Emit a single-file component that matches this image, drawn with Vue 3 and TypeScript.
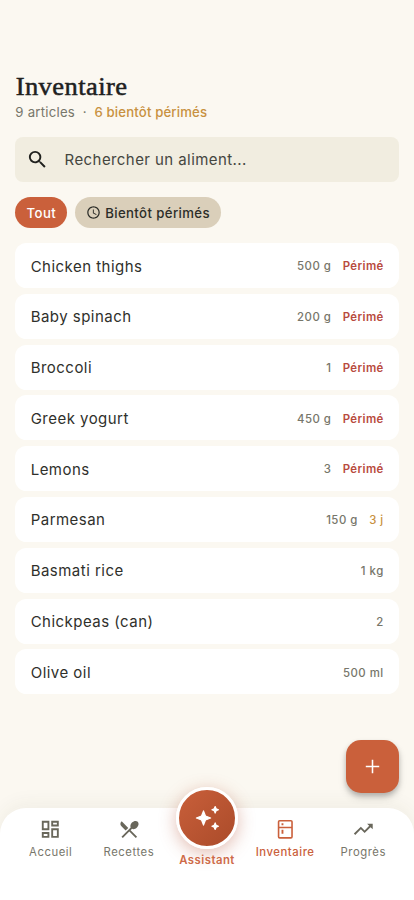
<script setup lang="ts">
interface Item {
  name: string
  quantity: string
  status?: string
  tone?: 'expired' | 'soon'
}

interface Tab {
  label: string
  icon: string
  active?: boolean
  assistant?: boolean
}

const items: Item[] = [
  { name: 'Chicken thighs', quantity: '500 g', status: 'Périmé', tone: 'expired' },
  { name: 'Baby spinach', quantity: '200 g', status: 'Périmé', tone: 'expired' },
  { name: 'Broccoli', quantity: '1', status: 'Périmé', tone: 'expired' },
  { name: 'Greek yogurt', quantity: '450 g', status: 'Périmé', tone: 'expired' },
  { name: 'Lemons', quantity: '3', status: 'Périmé', tone: 'expired' },
  { name: 'Parmesan', quantity: '150 g', status: '3 j', tone: 'soon' },
  { name: 'Basmati rice', quantity: '1 kg' },
  { name: 'Chickpeas (can)', quantity: '2' },
  { name: 'Olive oil', quantity: '500 ml' },
]

const tabs: Tab[] = [
  {
    label: 'Accueil',
    icon: 'M19 5v2h-4V5h4M9 5v6H5V5h4m10 8v6h-4v-6h4M9 17v2H5v-2h4M21 3h-8v6h8V3zM11 3H3v10h8V3zm10 8h-8v10h8V11zm-10 4H3v6h8v-6z',
  },
  {
    label: 'Recettes',
    icon: 'M8.1 13.34l2.83-2.83L3.91 3.5a4.008 4.008 0 0 0 0 5.66l4.19 4.18zm6.78-1.81c1.53.71 3.68.21 5.27-1.38 1.91-1.91 2.28-4.65.81-6.12-1.46-1.46-4.2-1.1-6.12.81-1.59 1.59-2.09 3.74-1.38 5.27L3.7 19.87l1.41 1.41L12 14.41l6.88 6.88 1.41-1.41L13.41 13l1.47-1.47z',
  },
  {
    label: 'Assistant',
    assistant: true,
    icon: 'M9 5.9l1.7 4.4L15.1 12l-4.4 1.7L9 18.1l-1.7-4.4L2.9 12l4.4-1.7zM19 2.2l.85 1.95L21.8 5l-1.95.85L19 7.8l-.85-1.95L16.2 5l1.95-.85zM19 16.2l.85 1.95 1.95.85-1.95.85L19 21.8l-.85-1.95L16.2 19l1.95-.85z',
  },
  {
    label: 'Inventaire',
    active: true,
    icon: 'M6 2h12a2 2 0 0 1 2 2v16a2 2 0 0 1-2 2H6a2 2 0 0 1-2-2V4a2 2 0 0 1 2-2zM5.7 4v5.2h12.6V4a.3.3 0 0 0-.3-.3H6a.3.3 0 0 0-.3.3zM5.7 10.9V20a.3.3 0 0 0 .3.3h12a.3.3 0 0 0 .3-.3v-9.1zM8 5.6h2v2H8zM8 12.6h2v4H8z',
  },
  {
    label: 'Progrès',
    icon: 'M16 6l2.29 2.29-4.88 4.88-4-4L2 16.59 3.41 18l6-6 4 4 6.3-6.29L22 12V6z',
  },
]
</script>

<template>
  <div class="screen">
    <main class="content">
      <h1>Inventaire</h1>
      <p class="summary">9 articles<span class="dot">·</span><strong>6 bientôt périmés</strong></p>

      <div class="search">
        <svg viewBox="0 0 24 24"><path d="M15.5 14h-.79l-.28-.27A6.471 6.471 0 0 0 16 9.5 6.5 6.5 0 1 0 9.5 16c1.61 0 3.09-.59 4.23-1.57l.27.28v.79l5 4.99L20.49 19l-4.99-5zm-6 0C7.01 14 5 11.99 5 9.5S7.01 5 9.5 5 14 7.01 14 9.5 11.99 14 9.5 14z" /></svg>
        <span>Rechercher un aliment...</span>
      </div>

      <div class="chips">
        <button class="chip selected">Tout</button>
        <button class="chip">
          <svg viewBox="0 0 24 24"><path d="M11.99 2C6.47 2 2 6.48 2 12s4.47 10 9.99 10C17.52 22 22 17.52 22 12S17.52 2 11.99 2zM12 20c-4.42 0-8-3.58-8-8s3.58-8 8-8 8 3.58 8 8-3.58 8-8 8zm.5-13H11v6l5.25 3.15.75-1.23-4.5-2.67z" /></svg>
          Bientôt périmés
        </button>
      </div>

      <ul class="items">
        <li v-for="item in items" :key="item.name">
          <span class="name">{{ item.name }}</span>
          <span class="quantity">{{ item.quantity }}</span>
          <span v-if="item.status" class="status" :class="item.tone">{{ item.status }}</span>
        </li>
      </ul>
    </main>

    <button class="fab" aria-label="Ajouter">
      <svg viewBox="0 0 24 24"><path d="M19 12.8h-6.2V19h-1.6v-6.2H5v-1.6h6.2V5h1.6v6.2H19z" /></svg>
    </button>

    <nav>
      <a v-for="tab in tabs" :key="tab.label" :class="{ active: tab.active, assistant: tab.assistant }">
        <span class="icon"><svg viewBox="0 0 24 24"><path :d="tab.icon" fill-rule="evenodd" /></svg></span>
        <span class="label">{{ tab.label }}</span>
      </a>
    </nav>
  </div>
</template>

<style>
body {
  margin: 0;
  background: #fbf8f1;
}
</style>

<style scoped>
* {
  box-sizing: border-box;
}

.screen {
  position: relative;
  display: flex;
  flex-direction: column;
  justify-content: space-between;
  height: 900px;
  overflow: hidden;
  background: #fbf8f1;
  color: #2f302b;
  font-family: Inter, sans-serif;
}

svg {
  display: block;
  fill: currentColor;
}

.content {
  padding: 72px 15.3px 0;
}

h1 {
  width: max-content;
  margin: 0;
  height: 30px;
  padding-left: 0.6px;
  font: 400 25px/30px "Liberation Serif", serif;
  letter-spacing: 0.42px;
  color: #20211e;
  -webkit-text-stroke: 0.5px currentColor;
  transform: scaleX(1.06);
  transform-origin: left;
}

.summary {
  margin: 1px 0 0;
  height: 19px;
  font-size: 13.2px;
  line-height: 19px;
  letter-spacing: 0.24px;
  color: #77766a;
}

.dot {
  margin: 0 7.7px;
}

.summary strong {
  font-weight: 500;
  letter-spacing: 0.14px;
  color: #c8913f;
}

.search {
  display: flex;
  align-items: center;
  gap: 15.5px;
  height: 45px;
  margin-top: 15px;
  padding-left: 10.8px;
  border-radius: 8px;
  background: #f1ede0;
  font-size: 15px;
  letter-spacing: 0.42px;
  color: #45463f;
}

.search svg {
  width: 23px;
  height: 23px;
  color: #20211e;
}

.chips {
  display: flex;
  gap: 7.5px;
  margin-top: 15px;
}

.chip {
  display: flex;
  align-items: center;
  gap: 4px;
  height: 31px;
  padding: 0 11.3px;
  border: 0;
  border-radius: 16px;
  background: #dacfba;
  color: #2c2d28;
  font: 500 13.2px Inter, sans-serif;
  letter-spacing: 0.38px;
}

.chip svg {
  width: 15px;
  height: 15px;
}

.chip.selected {
  background: #ca603b;
  color: #fff;
}

.items {
  display: grid;
  gap: 5.8px;
  margin: 15px 0 0;
  padding: 0;
  list-style: none;
}

.items li {
  display: flex;
  align-items: center;
  height: 45px;
  padding: 1px 15px 0 15.4px;
  border-radius: 11.5px;
  background: #fff;
}

.name {
  flex: 1;
  font-size: 15px;
  letter-spacing: 0.47px;
}

.quantity,
.status {
  padding-top: 0.6px;
  font-size: 11.4px;
  font-weight: 500;
  letter-spacing: 0.5px;
  color: #77766a;
}

.status {
  margin-left: 11.3px;
}

.status.expired {
  font-weight: 600;
  letter-spacing: 0.4px;
  color: #b84a3d;
}

.status.soon {
  color: #c8913f;
}

.fab {
  position: absolute;
  top: 740px;
  right: 15.3px;
  display: grid;
  place-items: center;
  width: 52.7px;
  height: 52.7px;
  padding: 0;
  border: 0;
  border-radius: 15px;
  background: #ca603b;
  color: #fff;
  box-shadow: 0 3px 5px rgba(0, 0, 0, 0.2), 0 5px 9px rgba(0, 0, 0, 0.12);
}

.fab svg {
  width: 23px;
  height: 23px;
}

nav {
  display: flex;
  height: 92.5px;
  padding: 10.3px 11.7px 0;
  border-radius: 26px 26px 0 0;
  background: #fff;
  box-shadow: 0 -4px 19px rgba(70, 60, 30, 0.06);
}

nav a {
  display: flex;
  flex: 1 1 0;
  flex-direction: column;
  align-items: center;
  min-width: 0;
  color: #77766a;
}

.icon svg {
  width: 22.6px;
  height: 22.6px;
  color: #69675b;
}

.label {
  margin-top: 4.6px;
  font-size: 11.3px;
  line-height: 15px;
  letter-spacing: 0.55px;
}

nav .active,
nav .active svg {
  color: #ca603b;
}

.active .label {
  font-weight: 500;
}

nav .assistant {
  margin-top: -30.6px;
}

.assistant .icon {
  display: grid;
  flex: none;
  place-items: center;
  width: 62px;
  height: 62px;
  border: 3.5px solid #fff;
  border-radius: 50%;
  background: linear-gradient(135deg, #ca603b, #a94a29);
  background-origin: border-box;
  box-shadow: 0 4px 17px rgba(180, 80, 50, 0.38);
}

.assistant .icon svg {
  width: 28px;
  height: 28px;
  color: #fff;
  stroke: currentColor;
  stroke-width: 1;
  stroke-linejoin: round;
}

.assistant .label {
  margin-top: 4px;
  font-weight: 600;
  letter-spacing: 0.5px;
  color: #ce6a48;
}
</style>
